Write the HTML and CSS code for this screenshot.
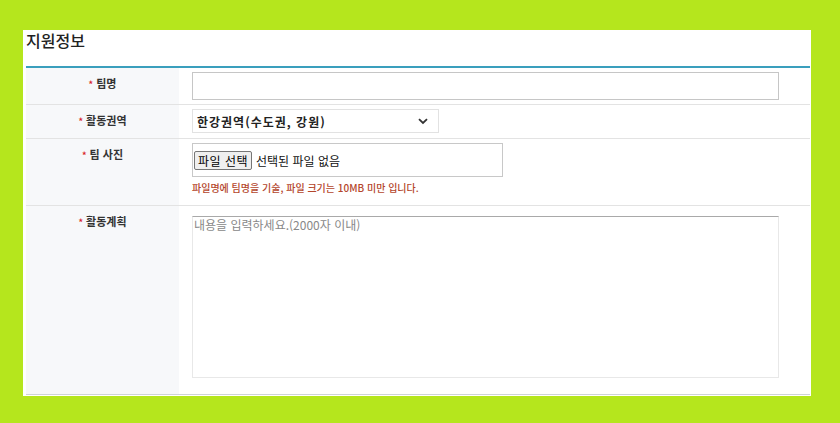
FILE: index.html
```html
<!DOCTYPE html>
<html lang="ko">
<head>
    <meta charset="UTF-8">
    <meta name="viewport" content="width=device-width, initial-scale=1.0">
    <title>지원정보</title>
    <link rel="stylesheet" href="styles.css">
</head>
<body>
    <div class="panel">
        <h2 class="title">지원정보</h2>
        <table class="form-table">
            <tr class="row-name">
                <th><span class="req">*</span> 팀명</th>
                <td><input type="text" class="input-text"></td>
            </tr>
            <tr class="row-area">
                <th><span class="req">*</span> 활동권역</th>
                <td>
                    <div class="select-box">
                        <span>한강권역(수도권, 강원)</span>
                        <svg width="10" height="7" viewBox="0 0 10 7"><path d="M1 1.2 L5 5 L9 1.2" fill="none" stroke="#333" stroke-width="1.8"/></svg>
                    </div>
                </td>
            </tr>
            <tr class="row-photo">
                <th><span class="req">*</span> 팀 사진</th>
                <td>
                    <div class="file-box">
                        <button type="button" class="file-btn">파일 선택</button>
                        <span class="file-name">선택된 파일 없음</span>
                    </div>
                    <p class="hint">파일명에 팀명을 기술, 파일 크기는 10MB 미만 입니다.</p>
                </td>
            </tr>
            <tr class="row-plan">
                <th><span class="req">*</span> 활동계획</th>
                <td><textarea class="plan" placeholder="내용을 입력하세요.(2000자 이내)"></textarea></td>
            </tr>
        </table>
    </div>
</body>
</html>
```
FILE: styles.css
```css
body {
    margin: 0;
    padding: 0;
    background: #b5e61d;
    font-family: "Noto Sans CJK KR", "Noto Sans", sans-serif;
}
.panel {
    width: 784px;
    height: 366px;
    margin: 30px 0 0 23px;
    padding: 0 1px 0 3px;
    background: white;
}
.title {
    margin: 0;
    height: 36px;
    font-size: 16px;
    font-weight: 500;
    line-height: 20px;
    color: #222;
    border-bottom: 2px solid #3a9fbd;
}
.form-table {
    width: 784px;
    border-collapse: collapse;
    border-bottom: 1px solid #cfd3d6;
}
.form-table th,
.form-table td {
    border-bottom: 1px solid #e3e3e3;
    vertical-align: top;
}
.form-table tr:last-child th,
.form-table tr:last-child td {
    border-bottom: 1px solid #cfd3d6;
}
.form-table th {
    width: 153px;
    padding: 8px 0 0;
    background: #f7f8fa;
    font-size: 11px;
    font-weight: 700;
    line-height: 14px;
    color: #333;
    text-align: center;
}
.req {
    color: #d9262b;
    font-size: 9px;
}
.form-table td {
    padding: 4px 0 4px 13px;
}
.row-area td {
    padding-bottom: 5px;
}
.input-text {
    display: block;
    box-sizing: border-box;
    width: 587px;
    height: 28px;
    margin: 0;
    border: 1px solid #c6c6c6;
    outline: none;
}
.select-box {
    box-sizing: border-box;
    width: 247px;
    height: 24px;
    display: flex;
    align-items: center;
    justify-content: space-between;
    padding: 0 10px 0 4px;
    border: 1px solid #e2e2e2;
    font-size: 12px;
    font-weight: 700;
    letter-spacing: 1px;
    color: #222;
}
.file-box {
    box-sizing: border-box;
    width: 311px;
    height: 34px;
    display: flex;
    align-items: flex-start;
    gap: 4px;
    padding: 7px 0 0 1px;
    border: 1px solid #c8c8c8;
}
.file-btn {
    height: 19px;
    padding: 0 3px;
    border: 1px solid #767676;
    border-radius: 2px;
    background: #efefef;
    font-family: inherit;
    font-size: 12px;
    line-height: 16px;
    letter-spacing: 0.5px;
    color: #000;
}
.file-name {
    font-size: 12px;
    line-height: 19px;
    color: #111;
}
.hint {
    margin: 5px 0 7px;
    font-size: 10px;
    font-weight: 500;
    line-height: 12px;
    color: #b4462c;
}
.row-plan td {
    padding: 10px 0 16px 13px;
}
.plan {
    display: block;
    box-sizing: border-box;
    width: 587px;
    height: 162px;
    margin: 0;
    padding: 1px 1px;
    border: 1px solid #e8e8e8;
    border-top-color: #a9a9a9;
    resize: none;
    font-family: "Noto Sans CJK KR", sans-serif;
    font-size: 12px;
    line-height: 14px;
    outline: none;
}
.plan::placeholder {
    color: #888;
}
```
